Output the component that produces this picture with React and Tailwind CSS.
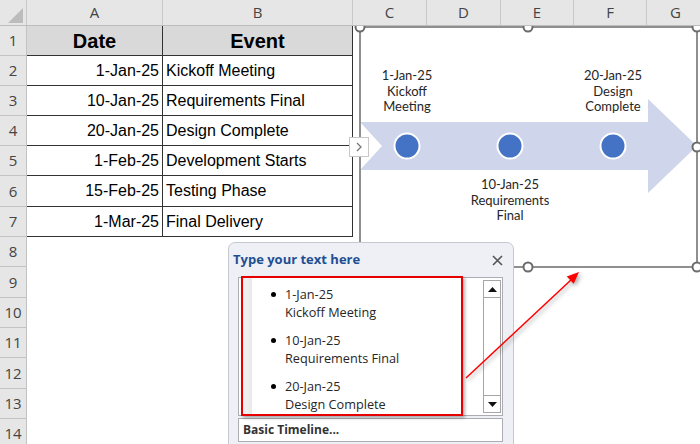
import React from "react";

const rows = [
  { h: "h-[30px]", date: "Date", event: "Event", head: true },
  { h: "h-[30px]", date: "1-Jan-25", event: "Kickoff Meeting" },
  { h: "h-[30px]", date: "10-Jan-25", event: "Requirements Final" },
  { h: "h-[30px]", date: "20-Jan-25", event: "Design Complete" },
  { h: "h-[30px]", date: "1-Feb-25", event: "Development Starts" },
  { h: "h-[31px]", date: "15-Feb-25", event: "Testing Phase" },
  { h: "h-[30px]", date: "1-Mar-25", event: "Final Delivery" },
  { h: "h-[30px]" },
  { h: "h-[31px]" },
  { h: "h-[30px]" },
  { h: "h-[30px]" },
  { h: "h-[31px]" },
  { h: "h-[30px]" },
  { h: "h-[30px]" },
];

const columns = [
  { name: "A", w: "w-[136px]" },
  { name: "B", w: "w-[190px]" },
  { name: "C", w: "w-[74px]" },
  { name: "D", w: "w-[74px]" },
  { name: "E", w: "w-[73px]" },
  { name: "F", w: "w-[73px]" },
];

const paneItems = [
  ["1-Jan-25", "Kickoff Meeting"],
  ["10-Jan-25", "Requirements Final"],
  ["20-Jan-25", "Design Complete"],
];

function Handle({ pos }) {
  return (
    <div
      className={`absolute z-10 w-[11px] h-[11px] -translate-x-1/2 -translate-y-1/2 rounded-full bg-white border-2 border-[#6b6b6b] ${pos}`}
    />
  );
}

function Label({ lines, pos }) {
  return (
    <div
      className={`absolute w-[100px] text-center text-[13px] leading-[15.5px] text-[#262626] font-['Lato',sans-serif] ${pos}`}
    >
      {lines.map((l) => (
        <div key={l}>{l}</div>
      ))}
    </div>
  );
}

export default function App() {
  return (
    <div className="relative w-[700px] h-[444px] overflow-hidden bg-white font-['Liberation_Sans',Arial,sans-serif]">
      {/* column headers */}
      <div className="relative z-30 flex h-[26px] bg-[#e6e6e6] border-b border-[#bdbdbd] font-['Open_Sans',sans-serif] text-[15px] text-[#444]">
        <div className="relative w-[27px] h-full border-r border-[#c8c8c8]">
          <svg className="absolute left-[8px] top-[8px]" width="15" height="15" viewBox="0 0 15 15">
            <polygon points="15,0 15,15 0,15" fill="#bcbcbc" />
          </svg>
        </div>
        {columns.map((c) => (
          <div
            key={c.name}
            className={`${c.w} h-full flex items-center justify-center border-r border-[#c8c8c8]`}
          >
            {c.name}
          </div>
        ))}
        <div className="flex-1 h-full flex items-center pl-[23px]">G</div>
      </div>

      {/* sheet rows */}
      {rows.map((r, i) => (
        <div key={i} className={`flex ${r.h}`}>
          <div className="w-[27px] h-full flex items-center justify-center bg-[#e6e6e6] border-r border-b border-[#c3c3c3] font-['Open_Sans',sans-serif] text-[15px] text-[#444]">
            {i + 1}
          </div>
          {r.date ? (
            <>
              <div
                className={`w-[136px] h-full flex items-center border-r border-b border-[#333] ${
                  r.head
                    ? "justify-center bg-[#d9d9d9] text-[20px] font-bold text-black"
                    : "justify-end pr-[3px] text-[16px] text-black"
                }`}
              >
                {r.date}
              </div>
              <div
                className={`w-[190px] h-full flex items-center border-r border-b border-[#333] ${
                  r.head
                    ? "justify-center bg-[#d9d9d9] text-[20px] font-bold text-black"
                    : "pl-[3px] text-[16px] text-black"
                }`}
              >
                {r.event}
              </div>
            </>
          ) : null}
          <div className="flex-1" />
        </div>
      ))}

      {/* SmartArt frame */}
      <div className="absolute left-[359px] top-[26px] w-[339px] h-[242px]">
        <svg className="absolute inset-0" width="339" height="242" viewBox="0 0 339 242">
          <polygon
            points="1,96 289,96 289,73 338,120 289,167 289,144 1,144 23,120"
            fill="#cfd5ea"
          />
          <circle cx="48" cy="120" r="12.5" fill="#4472c4" stroke="#fff" strokeWidth="2" />
          <circle cx="151" cy="120" r="12.5" fill="#4472c4" stroke="#fff" strokeWidth="2" />
          <circle cx="254" cy="120" r="12.5" fill="#4472c4" stroke="#fff" strokeWidth="2" />
        </svg>
        <Label lines={["1-Jan-25", "Kickoff", "Meeting"]} pos="left-[-2px] top-[42px]" />
        <Label lines={["10-Jan-25", "Requirements", "Final"]} pos="left-[101px] top-[151px]" />
        <Label lines={["20-Jan-25", "Design", "Complete"]} pos="left-[204px] top-[42px]" />
        <div className="absolute inset-0 border-2 border-[#8f8f8f]" />
      </div>

      <Handle pos="left-[360px] top-[27px]" />
      <Handle pos="left-[528px] top-[27px]" />
      <Handle pos="left-[697px] top-[27px]" />
      <Handle pos="left-[697px] top-[147px]" />
      <Handle pos="left-[528px] top-[267px]" />
      <Handle pos="left-[697px] top-[267px]" />
      <Handle pos="left-[360px] top-[267px]" />

      {/* text pane expander */}
      <div className="absolute z-20 left-[349px] top-[137px] w-[20px] h-[20px] bg-white border border-[#c8c8c8] flex items-center justify-center">
        <svg width="6" height="10" viewBox="0 0 6 10">
          <polyline points="1,1 5,5 1,9" fill="none" stroke="#777" strokeWidth="1.3" />
        </svg>
      </div>

      {/* text pane */}
      <div className="absolute z-20 left-[228px] top-[242px] w-[286px] h-[220px] rounded-t-[7px] bg-[#eef0f5] border border-[#c4c8d2] flex flex-col font-['Open_Sans',sans-serif]">
        <div className="h-[34px] flex items-center justify-between pl-[4px] pr-[10px]">
          <span className="text-[13px] font-bold text-[#1f4f93]">Type your text here</span>
          <svg width="11" height="11" viewBox="0 0 11 11">
            <path d="M1 1 L10 10 M10 1 L1 10" stroke="#555" strokeWidth="1.6" />
          </svg>
        </div>
        <div className="relative ml-[9px] w-[265px] h-[139px] bg-white border border-[#abadb3]">
          <div className="absolute left-[4px] top-0 bottom-0 w-[9px] bg-gradient-to-r from-[#f4f4f4] to-[#e9e9e9]" />
          <div className="relative flex flex-col gap-[10px] pt-[7px] pl-[32px] text-[12.7px] leading-[18px] text-[#262626]">
            {paneItems.map(([d, e]) => (
              <div key={d} className="flex gap-[9px]">
                <span className="mt-[7px] w-[5px] h-[5px] shrink-0 rounded-full bg-black" />
                <div>
                  <div>{d}</div>
                  <div>{e}</div>
                </div>
              </div>
            ))}
          </div>
          <div className="absolute right-[1px] top-[2px] bottom-[2px] w-[18px] border border-[#a6a6a6] flex flex-col bg-white">
            <div className="h-[17px] border-b border-[#a6a6a6] flex items-center justify-center">
              <svg width="9" height="5" viewBox="0 0 9 5">
                <polygon points="0,5 9,5 4.5,0" fill="#111" />
              </svg>
            </div>
            <div className="flex-1" />
            <div className="h-[17px] border-t border-[#a6a6a6] flex items-center justify-center">
              <svg width="9" height="5" viewBox="0 0 9 5">
                <polygon points="0,0 9,0 4.5,5" fill="#111" />
              </svg>
            </div>
          </div>
        </div>
        <div className="mt-[2px] ml-[9px] w-[265px] h-[24px] bg-white border border-[#abadb3] flex items-center pl-[4px] text-[12px] font-bold text-[#333]">
          Basic Timeline...
        </div>
      </div>

      {/* callout */}
      <div className="absolute z-30 left-[241px] top-[276px] w-[222px] h-[140px] border-2 border-[#e60000] shadow-[2px_2px_3px_rgba(0,0,0,0.3)]" />
      <svg
        className="absolute z-30 left-0 top-0 drop-shadow-[2px_2px_2px_rgba(0,0,0,0.35)]"
        width="700"
        height="444"
        viewBox="0 0 700 444"
      >
        <line x1="466" y1="378" x2="572" y2="279" stroke="#ff0000" strokeWidth="1.5" />
        <polygon points="579,272 573.7,283.8 566.8,276.6" fill="#ff0000" />
      </svg>
    </div>
  );
}
